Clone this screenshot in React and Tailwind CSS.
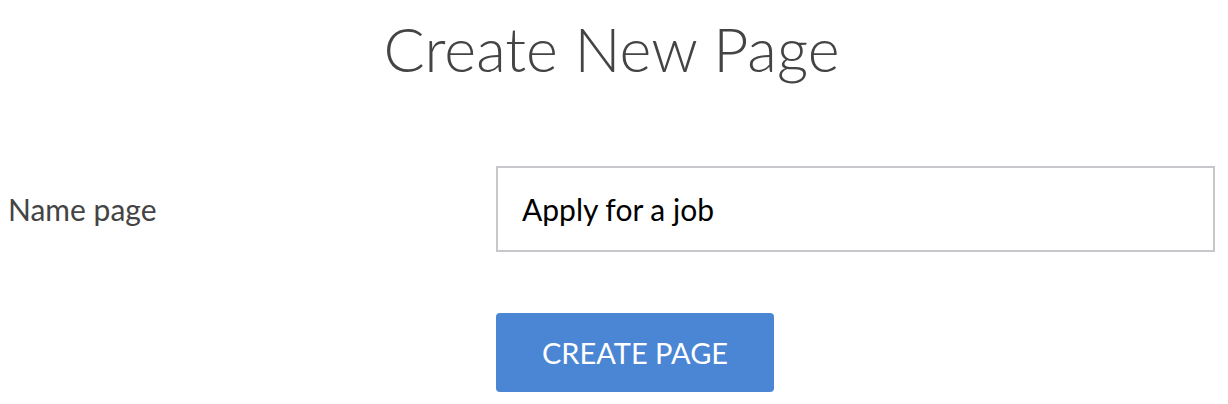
export default function App() {
  return (
    <div className="w-[1228px] h-[404px] bg-white pl-[8px] pr-[13px] pt-[13px]" style={{ fontFamily: "Lato, 'Open Sans', sans-serif" }}>
      <h1 className="text-center text-[61px] font-light text-[#444444] leading-[72px]">Create New Page</h1>
      <div className="mt-[81px] flex items-center">
        <label className="w-[488px] text-[30px] text-[#444444]">Name page</label>
        <div className="flex-1 h-[86px] border-2 border-[#c8c8cc] flex items-center pl-[24px]">
          <span className="text-[30px] text-black">Apply for a job</span>
        </div>
      </div>
      <div className="mt-[61px] pl-[488px]">
        <button className="w-[278px] h-[79px] rounded-[4px] bg-[#4a86d4] text-white text-[29px]">CREATE PAGE</button>
      </div>
    </div>
  );
}
